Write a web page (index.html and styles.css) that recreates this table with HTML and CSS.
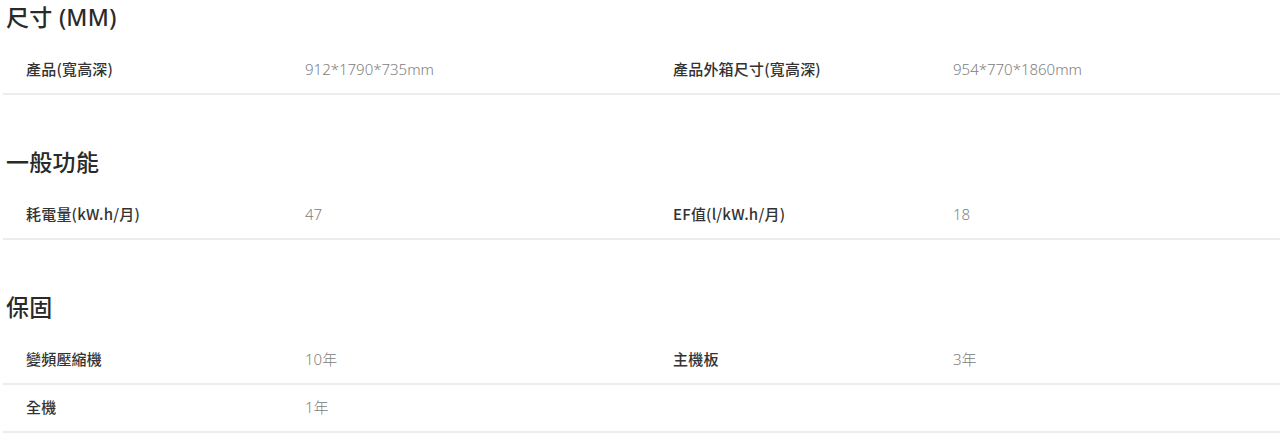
FILE: index.html
```html
<!DOCTYPE html>
<html lang="zh-Hant">
<head>
    <meta charset="UTF-8">
    <meta name="viewport" content="width=device-width, initial-scale=1.0">
    <title>規格</title>
    <link rel="stylesheet" href="styles.css">
</head>
<body>

<div class="spec">
    <section class="spec-group">
        <h2>尺寸 (MM)</h2>
        <div class="spec-row">
            <div class="spec-label">產品(寬高深)</div>
            <div class="spec-value">912*1790*735mm</div>
            <div class="spec-label">產品外箱尺寸(寬高深)</div>
            <div class="spec-value">954*770*1860mm</div>
        </div>
    </section>

    <section class="spec-group">
        <h2>一般功能</h2>
        <div class="spec-row">
            <div class="spec-label">耗電量(kW.h/月)</div>
            <div class="spec-value">47</div>
            <div class="spec-label">EF值(l/kW.h/月)</div>
            <div class="spec-value">18</div>
        </div>
    </section>

    <section class="spec-group">
        <h2>保固</h2>
        <div class="spec-row">
            <div class="spec-label">變頻壓縮機</div>
            <div class="spec-value">10年</div>
            <div class="spec-label">主機板</div>
            <div class="spec-value">3年</div>
        </div>
        <div class="spec-row">
            <div class="spec-label">全機</div>
            <div class="spec-value">1年</div>
        </div>
    </section>
</div>

</body>
</html>
```

FILE: styles.css
```css
body {
    margin: 0;
    padding: 0;
    background-color: #fff;
    font-family: "Noto Sans", "Noto Sans CJK TC", sans-serif;
    color: #333;
}

.spec {
    padding-left: 3px;
}

.spec-group {
    margin-bottom: 50px;
}

.spec-group h2 {
    margin: 0 0 10px 3px;
    height: 37px;
    line-height: 34px;
    font-size: 23px;
    font-weight: 500;
    letter-spacing: 0.3px;
    color: #2a2a2a;
}

.spec-row {
    display: grid;
    grid-template-columns: 279px 368px 280px 1fr;
    align-items: center;
    height: 43px;
    padding: 0 0 3px 23px;
    border-bottom: 2px solid #ececec;
    font-size: 15px;
}

.spec-label {
    font-family: "Noto Sans CJK TC", "Noto Sans", sans-serif;
    font-weight: 500;
    letter-spacing: 0.2px;
    color: #333;
}

.spec-value {
    font-weight: 300;
    color: #808080;
}
```
